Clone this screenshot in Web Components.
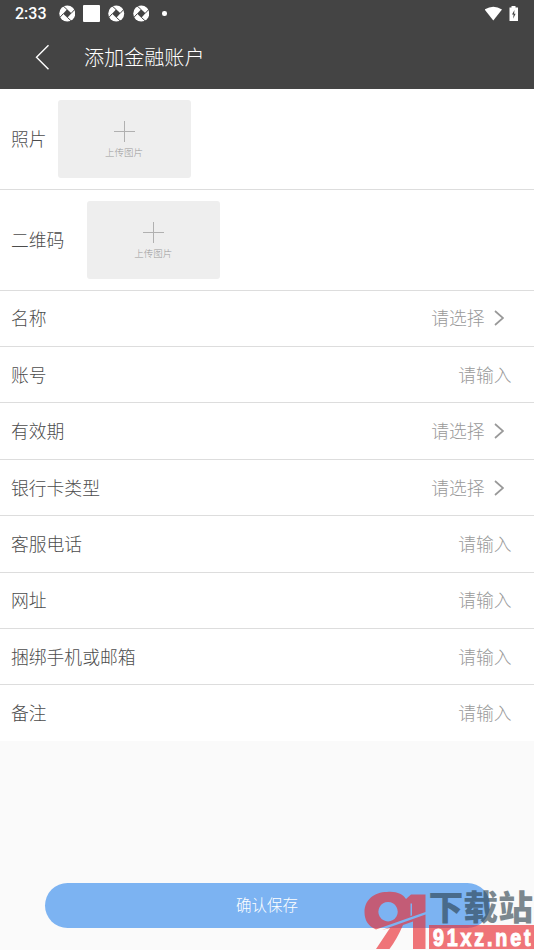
<!DOCTYPE html>
<html lang="zh-CN"><head><meta charset="utf-8"><title>添加金融账户</title>
<style>
html,body{margin:0;height:100%}
body{font-family:"Noto Sans CJK SC","Liberation Sans",sans-serif;font-weight:300;overflow:hidden}
</style></head><body>
<account-page></account-page>
<script>
const define=(name,html)=>customElements.define(name,class extends HTMLElement{
  connectedCallback(){
    if(this.shadowRoot)return;
    this.attachShadow({mode:'open'}).innerHTML=html(this);
  }
});
define('shutter-icon',()=>`<style>:host{display:block;width:16.5px;height:17px}svg{display:block}</style>
<svg width="16.5" height="17" viewBox="0 0 17 17"><circle cx="8.5" cy="8.5" r="8.2" fill="#fff"/><g transform="rotate(-2 8.5 8.5)"><path d="M8.5 4.2L12.8 8.500L8.500 12.800L4.200 8.500Z" fill="#444"/><path d="M8.5 4.500L4.200 .2M12.500 8.500L16.800 4.200M8.500 12.500L12.800 16.800M4.500 8.500L.2 12.800" stroke="#444" stroke-width="1"/></g></svg>`);
define('status-bar',()=>`<style>:host{display:flex;height:27px;align-items:center;padding:0 15px;font:500 16px/27px Roboto,sans-serif;color:#fff}
.i{display:flex;gap:8px;margin-left:12px;align-items:center;flex:1}.s{width:17px;height:17px;background:#fff;border-radius:1px}.d{width:4.5px;height:4.5px;border-radius:50%;background:#fff;margin-left:5px}svg{display:block}</style>
<span>2:33</span><div class="i"><shutter-icon></shutter-icon><div class="s"></div><shutter-icon></shutter-icon><shutter-icon></shutter-icon><div class="d"></div></div>
<svg width="34" height="18" viewBox="485 4 34 18"><path d="M484.700 8.500Q493.300 3 502 8.500L493.300 19.500Z" fill="#fff"/><path d="M509.500 6.500h2V5h4v1.500h2.500V20h-8.500z" fill="#fff"/><path d="M514.500 9l-2.500 4.400h1.600l-.5 4.300 2.500-5h-1.500z" fill="#444"/></svg>`);
define('nav-bar',()=>`<style>:host{display:flex;height:61.7px;align-items:center;box-sizing:border-box;padding:0 35px 2px;color:#fff;font-size:20.1px;gap:35px}svg{display:block}span{line-height:30px}</style>
<svg width="14" height="26" viewBox="0 0 14 26"><path d="M13.500 1.200L1.500 13.200L13.500 25.200" fill="none" stroke="#fff" stroke-width="1.400"/></svg><span><slot></slot></span>`);
define('upload-box',()=>`<style>:host{display:flex;flex-direction:column;align-items:center;box-sizing:border-box;width:133px;height:78px;padding-top:21px;background:#eee;border-radius:3px;color:#999;font-size:9.5px;line-height:14px;gap:3px}svg{display:block}</style>
<svg width="21" height="21"><path d="M10.500 0V21M0 10.500H21" stroke="#b0b0b0"/></svg><span>上传图片</span>`);
define('upload-row',e=>`<style>:host{display:flex;box-sizing:border-box;height:101px;padding:0 11px;align-items:center;gap:${e.getAttribute('gap')}px;background:#fff;border-bottom:1px solid #ddd;font-size:17.8px;color:#4c4c4c}span{line-height:26px;margin-bottom:2px}</style><span><slot></slot></span><upload-box></upload-box>`);
define('form-row',e=>{const p=e.hasAttribute('pick');return `<style>:host{display:flex;box-sizing:border-box;height:56.4px;padding:0 ${p?30:22.5}px 2px 11px;align-items:center;justify-content:space-between;background:#fff;border-bottom:1px solid #ddd;font-size:17.8px;color:#4c4c4c;line-height:26px}:host(:last-of-type){border-color:#fafafa}.v{display:flex;align-items:center;gap:9px;color:#999}svg{display:block;margin-top:2px}</style>
<span><slot></slot></span><div class="v"><span>${p?'请选择':'请输入'}</span>${p?'<svg width="10.500" height="16"><path d="M1 1L9 8L1 15" fill="none" stroke="#999" stroke-width="1.700"/></svg>':''}</div>`});
define('save-button',()=>`<style>:host{display:flex;box-sizing:border-box;height:44.5px;padding-bottom:3px;margin:0 44.5px;border-radius:23px;background:#7cb3f2;color:#fff;font-size:15.5px;align-items:center;justify-content:center;line-height:24px}</style><span><slot></slot></span>`);
define('site-mark',()=>`<style>:host{display:block;position:absolute;left:360px;top:885px;width:174px;height:65px}svg{display:block}</style>
<svg width="174" height="65" viewBox="360 885 174 65"><g fill="#ea2e34" opacity=".65"><path fill-rule="evenodd" d="M387 892C396 891 403 894 406 899L411 894.500H425.500V912L376 929.500C368 926 364.500 920 364.500 912C364.500 900 374 892 387 892ZM388 902a9.700 9.700 0 1 0 .1 0ZM410.500 903.500V916L412 915.500V903.500Z"/><path d="M382 930L425.500 914.500V949H413V921.500L403 925Q397 939 389.500 949H376L390 928Z"/><path d="M429 925H534V949H429Z"/></g>
<text x="428.500" y="920" textLength="104.500" lengthAdjust="spacingAndGlyphs" font-family="Liberation Sans,Noto Sans CJK SC,sans-serif" font-size="34" font-weight="900" fill="#283c48" opacity=".6">下载站</text>
<text transform="translate(433 945.5) scale(.82 1)" textLength="119" lengthAdjust="spacing" font-family="Liberation Sans,sans-serif" font-size="24" font-weight="700" fill="#fff" stroke="#fff" stroke-width="1.1">91xz.net</text></svg>`);
define('account-page',()=>`<style>:host{display:flex;flex-direction:column;position:relative;height:950px;box-sizing:border-box;background:#fafafa;overflow:hidden}header{background:#444}main{flex:1}save-button{margin-bottom:22.5px}</style>
<header><status-bar></status-bar><nav-bar>添加金融账户</nav-bar></header>
<main><upload-row gap="11">照片</upload-row><upload-row gap="22.500">二维码</upload-row>
<form-row pick>名称</form-row><form-row>账号</form-row><form-row pick>有效期</form-row><form-row pick>银行卡类型</form-row><form-row>客服电话</form-row><form-row>网址</form-row><form-row>捆绑手机或邮箱</form-row><form-row>备注</form-row></main>
<save-button>确认保存</save-button><site-mark></site-mark>`);
</script></body></html>
